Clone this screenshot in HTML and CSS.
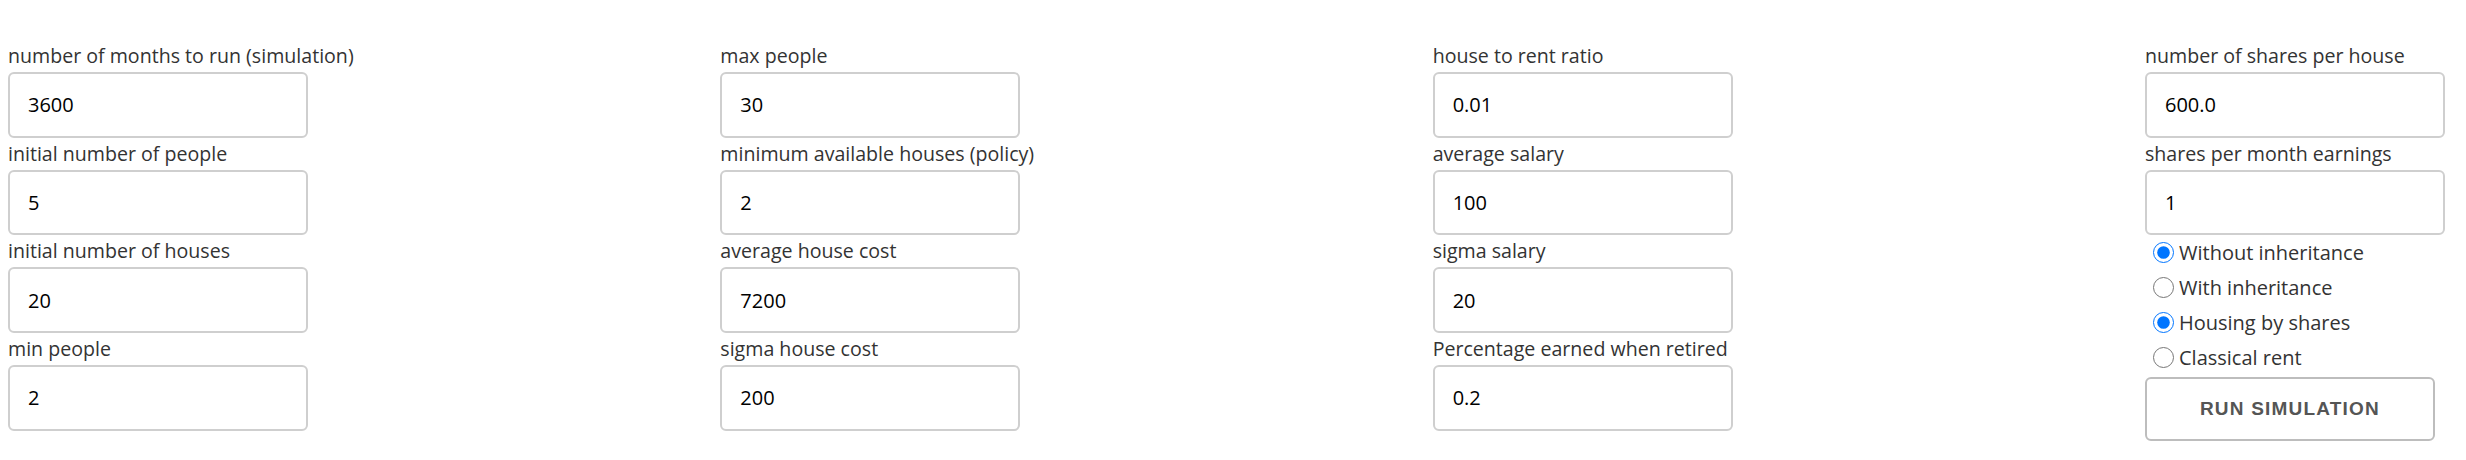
FILE: index.html
```html
<!DOCTYPE html>
<html>
<head>
<meta charset="utf-8">
<link rel="stylesheet" href="styles.css">
</head>
<body>
<form class="form">
  <div class="col">
    <label class="lbl">number of months to run (simulation)</label>
    <input class="field" type="text" value="3600">
    <label class="lbl">initial number of people</label>
    <input class="field" type="text" value="5">
    <label class="lbl">initial number of houses</label>
    <input class="field" type="text" value="20">
    <label class="lbl">min people</label>
    <input class="field" type="text" value="2">
  </div>
  <div class="col">
    <label class="lbl">max people</label>
    <input class="field" type="text" value="30">
    <label class="lbl">minimum available houses (policy)</label>
    <input class="field" type="text" value="2">
    <label class="lbl">average house cost</label>
    <input class="field" type="text" value="7200">
    <label class="lbl">sigma house cost</label>
    <input class="field" type="text" value="200">
  </div>
  <div class="col">
    <label class="lbl">house to rent ratio</label>
    <input class="field" type="text" value="0.01">
    <label class="lbl">average salary</label>
    <input class="field" type="text" value="100">
    <label class="lbl">sigma salary</label>
    <input class="field" type="text" value="20">
    <label class="lbl">Percentage earned when retired</label>
    <input class="field" type="text" value="0.2">
  </div>
  <div class="col">
    <label class="lbl">number of shares per house</label>
    <input class="field" type="text" value="600.0">
    <label class="lbl">shares per month earnings</label>
    <input class="field" type="text" value="1">
    <label class="radio-row"><input class="radio" type="radio" name="inh" checked><span>Without inheritance</span></label>
    <label class="radio-row"><input class="radio" type="radio" name="inh"><span>With inheritance</span></label>
    <label class="radio-row"><input class="radio" type="radio" name="mode" checked><span>Housing by shares</span></label>
    <label class="radio-row"><input class="radio" type="radio" name="mode"><span>Classical rent</span></label>
    <button class="run" type="button">RUN SIMULATION</button>
  </div>
</form>
</body>
</html>
```
FILE: styles.css
```css
html, body {
  background: #ffffff;
}
body {
  margin: 8px;
  font-family: "Open Sans", "Noto Sans", sans-serif;
  color: #333333;
}
.form {
  display: grid;
  grid-template-columns: repeat(4, 313px);
  justify-content: space-between;
  padding-top: 32px;
}
.col {
  display: flex;
  flex-direction: column;
  align-items: flex-start;
}
.lbl {
  display: block;
  font-size: 19.6px;
  line-height: 32px;
  height: 32px;
  white-space: nowrap;
  color: #333333;
}
.field {
  box-sizing: border-box;
  width: 300px;
  height: 65.7px;
  margin: 0;
  padding: 0 18px;
  border: 2px solid #cfcfcf;
  border-radius: 6px;
  font-family: "Open Sans", "Noto Sans", sans-serif;
  font-size: 20px;
  color: #000000;
  background: #ffffff;
  outline: none;
}
.radio-row {
  display: flex;
  align-items: center;
  height: 35px;
  font-size: 20px;
  color: #333333;
  white-space: nowrap;
}
.radio {
  width: 21px;
  height: 21px;
  margin: 0 5px 0 8px;
}
.run {
  box-sizing: border-box;
  width: 290px;
  height: 64px;
  margin-top: 2px;
  border: 2px solid #bdbdbd;
  border-radius: 6px;
  background: #ffffff;
  font-family: "Liberation Sans", Arial, sans-serif;
  font-weight: bold;
  font-size: 19px;
  letter-spacing: 1.2px;
  color: #555555;
}
```
